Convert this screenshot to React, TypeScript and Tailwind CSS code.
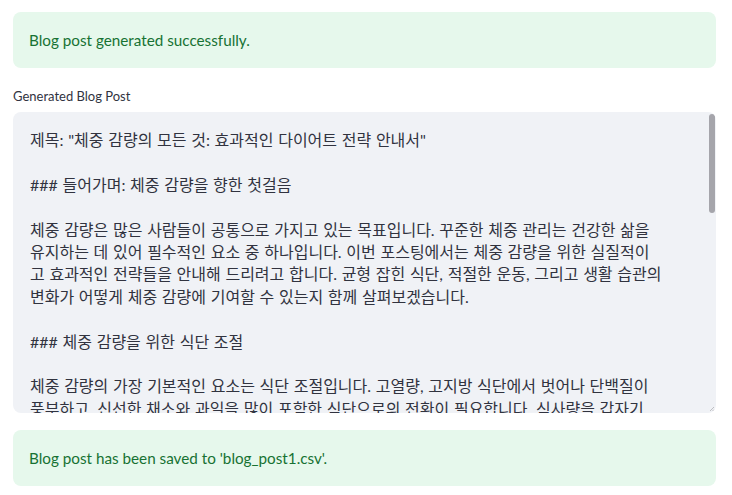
import React from "react";

const lines: string[] = [
  '제목: "체중 감량의 모든 것: 효과적인 다이어트 전략 안내서"',
  "",
  "### 들어가며: 체중 감량을 향한 첫걸음",
  "",
  "체중 감량은 많은 사람들이 공통으로 가지고 있는 목표입니다. 꾸준한 체중 관리는 건강한 삶을",
  "유지하는 데 있어 필수적인 요소 중 하나입니다. 이번 포스팅에서는 체중 감량을 위한 실질적이",
  "고 효과적인 전략들을 안내해 드리려고 합니다. 균형 잡힌 식단, 적절한 운동, 그리고 생활 습관의",
  "변화가 어떻게 체중 감량에 기여할 수 있는지 함께 살펴보겠습니다.",
  "",
  "### 체중 감량을 위한 식단 조절",
  "",
  "체중 감량의 가장 기본적인 요소는 식단 조절입니다. 고열량, 고지방 식단에서 벗어나 단백질이",
  "풍부하고, 신선한 채소와 과일을 많이 포함한 식단으로의 전환이 필요합니다. 식사량을 갑자기",
  "줄이기보다는 조금씩 줄여 나가는 것이 좋습니다.",
];

export default function App() {
  return (
    <div
      className="w-[732px] h-[495px] bg-white px-[13px] pt-[12px] flex flex-col"
      style={{ fontFamily: "Lato, 'Noto Sans CJK KR', sans-serif" }}
    >
      <div className="w-[703px] h-[56px] rounded-lg bg-[#e6f8ec] flex items-center px-4 text-[15.25px] text-[#177233]">
        Blog post generated successfully.
      </div>
      <div className="mt-[20px] h-[18px] flex items-center text-[13px] text-[#31333f]">
        Generated Blog Post
      </div>
      <div className="relative mt-[6px] w-[703px] h-[301px] rounded-lg bg-[#f0f2f6] overflow-hidden">
        <div className="pl-[17px] pt-[17px] text-[16px] leading-[22.4px] text-[#31333f] [word-spacing:0.6px]">
          {lines.map((l, i) => (
            <div key={i} className="whitespace-pre h-[22.4px]">
              {l === "" ? " " : l}
            </div>
          ))}
        </div>
        <div className="absolute right-[1px] top-[2px] w-[6px] h-[99px] rounded-full bg-[#a5a5ab]" />
        <svg className="absolute right-[1px] bottom-[1px]" width="6" height="6" viewBox="0 0 6 6">
          <path d="M1 5 L5 1 M3.5 5 L5 3.5" stroke="#b0b0b5" strokeWidth="0.8" />
        </svg>
      </div>
      <div className="mt-[17px] w-[703px] h-[56px] rounded-lg bg-[#e6f8ec] flex items-center px-4 text-[15.25px] text-[#177233]">
        Blog post has been saved to 'blog_post1.csv'.
      </div>
    </div>
  );
}
